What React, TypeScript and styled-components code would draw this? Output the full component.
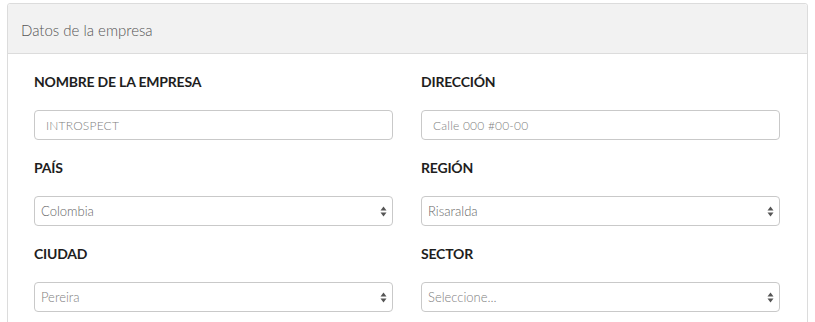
import React from "react";
import styled, { createGlobalStyle } from "styled-components";

const Global = createGlobalStyle`
  html, body { margin: 0; padding: 0; background: #fff; }
  body { font-family: Lato, "Open Sans", Arial, sans-serif; overflow: hidden; }
  * { box-sizing: border-box; }
`;

const Page = styled.div`
  height: 100vh;
  overflow: hidden;
  padding: 3px 7px 0 7px;
`;

const Panel = styled.section`
  border: 1px solid #dcdcdc;
  border-radius: 3px;
  background: #fff;
  min-height: 340px;
`;

const PanelHeader = styled.header`
  height: 50px;
  background: #f2f2f2;
  border-bottom: 1px solid #dcdcdc;
  border-radius: 3px 3px 0 0;
  display: flex;
  align-items: center;
  padding: 2px 13px 0;
  font-size: 15px;
  font-weight: 300;
  color: #555;
`;

const PanelBody = styled.div`
  padding: 19px 27px 0 26px;
  display: grid;
  grid-template-columns: 1fr 1fr;
  column-gap: 28px;
`;

const Field = styled.div`
  display: flex;
  flex-direction: column;
  padding-bottom: 19px;
`;

const Label = styled.label`
  font-size: 14px;
  font-weight: 700;
  color: #1e1e1e;
  line-height: 18px;
  height: 18px;
  margin-bottom: 19px;
  letter-spacing: -0.2px;
`;

const Input = styled.input`
  height: 30px;
  width: 100%;
  border: 1px solid #c9c9c9;
  border-radius: 4px;
  padding: 0 11px;
  font-family: Lato, Arial, sans-serif;
  font-size: 12px;
  font-weight: 300;
  color: #777;
  outline: none;
  &::placeholder { color: #808080; font-weight: 300; letter-spacing: 0.2px; }
`;

const SelectWrap = styled.div`
  position: relative;
  height: 30px;
`;

const Select = styled.select<{ $placeholder?: boolean }>`
  appearance: none;
  -webkit-appearance: none;
  height: 30px;
  width: 100%;
  border: 1px solid #c9c9c9;
  border-radius: 4px;
  padding: 0 24px 0 6px;
  font-family: Lato, Arial, sans-serif;
  font-size: 13px;
  font-weight: 300;
  color: ${(p) => (p.$placeholder ? "#808080" : "#666")};
  background: #fff;
  outline: none;
`;

const Arrows = styled.svg`
  position: absolute;
  right: 6px;
  top: 10px;
  pointer-events: none;
`;

const SelectArrows = () => (
  <Arrows width="7" height="11" viewBox="0 0 7 11">
    <path d="M3.5 0.5 L6.5 4.5 L0.5 4.5 Z" fill="#555" />
    <path d="M3.5 10.5 L6.5 6.5 L0.5 6.5 Z" fill="#555" />
  </Arrows>
);

const SelectField = ({ value, placeholder }: { value: string; placeholder?: boolean }) => (
  <SelectWrap>
    <Select $placeholder={placeholder} defaultValue={value}>
      <option value={value}>{value}</option>
    </Select>
    <SelectArrows />
  </SelectWrap>
);

export default function App() {
  return (
    <Page>
      <Global />
      <Panel>
        <PanelHeader>Datos de la empresa</PanelHeader>
        <PanelBody>
          <Field>
            <Label>NOMBRE DE LA EMPRESA</Label>
            <Input placeholder="INTROSPECT" />
          </Field>
          <Field>
            <Label>DIRECCIÓN</Label>
            <Input placeholder="Calle 000 #00-00" />
          </Field>
          <Field>
            <Label>PAÍS</Label>
            <SelectField value="Colombia" />
          </Field>
          <Field>
            <Label>REGIÓN</Label>
            <SelectField value="Risaralda" />
          </Field>
          <Field>
            <Label>CIUDAD</Label>
            <SelectField value="Pereira" placeholder />
          </Field>
          <Field>
            <Label>SECTOR</Label>
            <SelectField value="Seleccione..." placeholder />
          </Field>
        </PanelBody>
      </Panel>
    </Page>
  );
}
